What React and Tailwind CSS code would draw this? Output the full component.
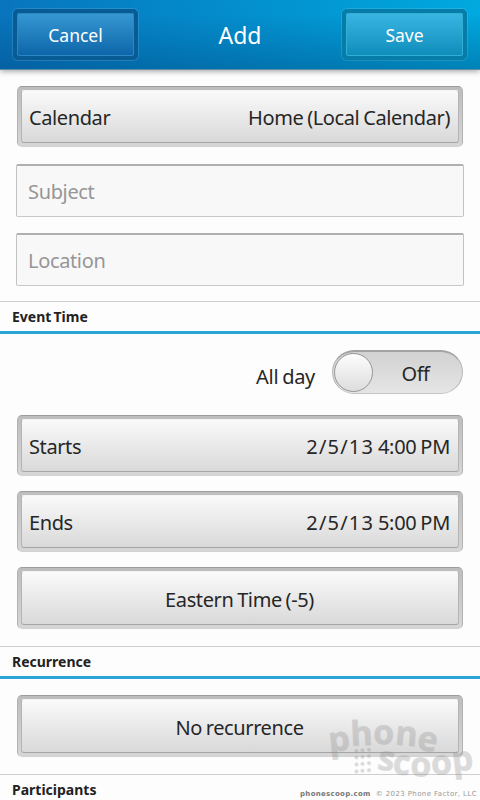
import clsx from "clsx";

const HeaderButton = ({ label, light }) => (
  <button
    className={clsx(
      "h-[51px] w-[125px] rounded-[5px] border-4 p-0 shadow-[0_0_0_1px_rgba(255,255,255,0.12)]",
      light ? "border-[#067da8]" : "border-[#075c96]"
    )}
  >
    <span
      className={clsx(
        "flex h-full items-center justify-center rounded-[2px] border pt-0.5 text-[17.5px] text-white",
        light
          ? "border-[#35aed6] bg-linear-to-b from-[#38b5e3] to-[#0c8ebb]"
          : "border-[#2c86c2] bg-linear-to-b from-[#3597d2] to-[#0c66a9]"
      )}
    >
      {label}
    </span>
  </button>
);

const PickerButton = ({ label, value, className }) => (
  <button
    className={clsx(
      "flex w-full rounded-[5px] border border-t-[#9d9d9d] border-x-[#b2b2b2] border-b-[#d2d2d2] bg-linear-to-b from-[#bdbdbd] to-[#d6d6d6] p-[3px] text-[20px] tracking-[-0.4px] [word-spacing:-1px] text-[#262626]",
      className
    )}
  >
    <span
      className={clsx(
        "flex h-full w-full items-center rounded-[3px] border border-t-[#f4f4f4] border-x-[#b5b5b5] border-b-[#a5a5a5] bg-linear-to-b from-[#fafafa] to-[#d9d9d9] pt-[3px] pr-2 pl-[7px]",
        value ? "justify-between" : "justify-center"
      )}
    >
      <span>{label}</span>
      {value && <span>{value}</span>}
    </span>
  </button>
);

const DateTime = ({ date, time }) => (
  <>
    <span className="tracking-[1.2px]">{date}</span>{" "}
    <span className="tracking-[-0.3px]">{time}</span>
  </>
);

const Field = ({ placeholder, className }) => (
  <input
    placeholder={placeholder}
    className={clsx(
      "block h-[53px] w-full rounded-[2px] border border-t-2 border-t-[#b0b0b0] border-x-[#c2c2c2] border-b-[#c8c8c8] bg-[#f8f8f8] px-[11px] pt-px text-[20px] tracking-[-0.35px] placeholder:text-[#969696]",
      className
    )}
  />
);

const SectionTitle = ({ children, className }) => (
  <h2
    className={clsx(
      "h-[33px] border-t border-b-[3px] border-t-[#cecece] border-b-[#2aa5d6] pl-3 text-[14px] leading-[30px] font-bold [word-spacing:-1.5px] text-[#222]",
      className
    )}
  >
    {children}
  </h2>
);

// Wordmark letters sit on two opposite curves
const Watermark = () => (
  <svg
    width="160"
    height="100"
    viewBox="320 700 160 100"
    className="pointer-events-none absolute top-[700px] left-[320px] opacity-30"
    fill="#8c8c8c"
    stroke="#8c8c8c"
    strokeWidth="0.6"
    fontFamily="'Open Sans', 'Noto Sans', sans-serif"
    fontWeight="700"
    fontSize="34"
  >
    <text x="329.5 351 373 394.5 416" y="752 746 744 744.5 749" rotate="-6 -3 1 5 10">
      phone
    </text>
    <text x="376.5 392 410 431.5 453" y="769 773.5 776 775 772" rotate="9 6 2 -3 -7">
      scoop
    </text>
    {[750.5, 757, 764, 771].map((y) =>
      [356.5, 362.5, 369].map((x) => (
        <circle key={`${x}-${y}`} cx={x} cy={y + 0.5 - (x - 356) / 10} r="1.7" />
      ))
    )}
  </svg>
);

const App = () => {
  return (
    <div className="relative flex h-[800px] w-[480px] flex-col overflow-hidden bg-[#fdfdfd] font-['Noto_Sans','Open_Sans',sans-serif]">
      {/* Title bar */}
      <header className="relative h-[70px] shrink-0 border-b border-[#5d8ea8] bg-linear-to-r from-[#0875be] to-[#00a9df] shadow-[0_1px_6px_rgba(0,0,0,0.4)]">
        <div className="flex h-full items-center justify-between bg-linear-to-b from-transparent from-20% to-[#003c6f]/35 px-[13px]">
          <HeaderButton label="Cancel" />
          <h1 className="pt-0.5 text-[23px] text-white">Add</h1>
          <HeaderButton label="Save" light />
        </div>
      </header>

      <div className="flex flex-col px-4 pt-4">
        <div className="px-px">
          <PickerButton label="Calendar" value="Home (Local Calendar)" className="h-[61px]" />
        </div>
        <Field placeholder="Subject" className="mt-[17px]" />
        <Field placeholder="Location" className="mt-4" />
      </div>

      <SectionTitle className="mt-[15px]">Event Time</SectionTitle>

      <div className="flex flex-col px-[17px] pt-4">
        <div className="flex h-11 items-center justify-end gap-[17px] text-[20px] text-[#262626]">
          <span className="pt-2.5 tracking-[-0.3px] [word-spacing:-1px]">All day</span>
          <div className="flex h-11 w-[131px] items-center rounded-full border border-t-2 border-t-[#a3a3a3] border-x-[#b8b8b8] border-b-[#c4c4c4] bg-linear-to-b from-[#d2d2d2] to-[#e5e5e5] pl-px">
            <span className="size-[39px] rounded-full border border-[#969696] bg-linear-to-b from-[#fdfdfd] to-[#dddddd]" />
            <span className="flex-1 pt-0.5 pr-1 text-center tracking-[-0.4px]">Off</span>
          </div>
        </div>
        <PickerButton
          label="Starts"
          value={<DateTime date="2/5/13" time="4:00 PM" />}
          className="mt-[21px] h-[61px]"
        />
        <PickerButton
          label="Ends"
          value={<DateTime date="2/5/13" time="5:00 PM" />}
          className="mt-[15px] h-[61px]"
        />
        <PickerButton label="Eastern Time (-5)" className="mt-[15px] h-[62px]" />
      </div>

      <SectionTitle className="mt-[17px]">Recurrence</SectionTitle>

      <div className="px-[17px] pt-4">
        <PickerButton label="No recurrence" className="h-[62px]" />
      </div>

      <SectionTitle className="mt-[17px]">Participants</SectionTitle>

      <Watermark />
      <p className="absolute right-[3px] bottom-0 flex gap-[5px] font-['DejaVu_Sans',sans-serif] text-[7px] leading-[11px] text-[#999]">
        <b className="tracking-[0.3px] text-[#777]">phonescoop.com</b>
        <span className="tracking-[0.4px]">© 2023 Phone Factor, LLC</span>
      </p>
    </div>
  );
};

export default App;
